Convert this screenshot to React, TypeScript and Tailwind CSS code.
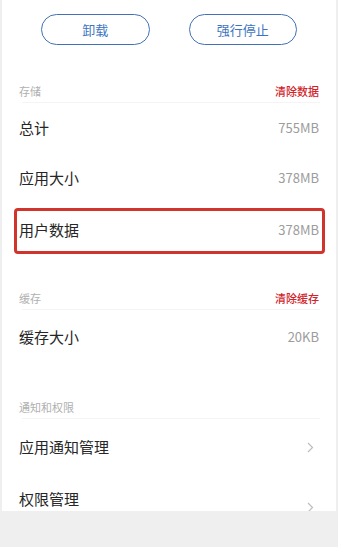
const font = { fontFamily: '"Noto Sans CJK SC", "Noto Sans", sans-serif' };

function Chevron({ className = "" }: { className?: string }) {
  return (
    <svg width="7" height="11" viewBox="0 0 7 11" className={className}>
      <polyline points="1,1 5.5,5.5 1,10" fill="none" stroke="#bdbdbd" strokeWidth="1.2" />
    </svg>
  );
}

function SectionHeader({ title, action, height }: { title: string; action?: string; height: string }) {
  return (
    <div className={`flex items-end ${height}`}>
      <div className="relative flex flex-1 items-center justify-between px-[17px] pb-[4px]">
        <span className="text-[11px] leading-[16px] text-[#b0b0b0]">{title}</span>
        {action && <span className="text-[11px] font-medium leading-[16px] text-[#d1232a]">{action}</span>}
        <div className="absolute bottom-0 left-[20px] right-[16px] h-px bg-[#f4f4f4]" />
      </div>
    </div>
  );
}

function Row({ label, value, height = "h-[50px]" }: { label: string; value: string; height?: string }) {
  return (
    <div className={`flex items-center justify-between px-[17px] ${height}`}>
      <span className="text-[15px] text-[#262626]">{label}</span>
      <span className="text-[13px] text-[#9c9c9c]">{value}</span>
    </div>
  );
}

export default function App() {
  return (
    <div className="h-[547px] w-[338px] overflow-hidden bg-[#efefef]" style={font}>
      <div className="mx-[2px] h-[511px] overflow-hidden bg-white">
        <div className="flex gap-[39px] px-[39px] pt-[14px]">
          <button
            type="button"
            className="h-[31px] flex-1 rounded-full border-[1.5px] border-[#4272b5] text-[13px] text-[#3b74bf]"
          >
            卸载
          </button>
          <button
            type="button"
            className="h-[31px] flex-1 rounded-full border-[1.5px] border-[#4272b5] text-[13px] text-[#3b74bf]"
          >
            强行停止
          </button>
        </div>

        <SectionHeader title="存储" action="清除数据" height="h-[58px]" />
        <Row label="总计" value="755MB" />
        <Row label="应用大小" value="378MB" />
        <div className="ml-[12px] mr-[11px] mt-[5px] flex h-[46px] items-center justify-between rounded-[4px] border-[3px] border-[#d0342c] pb-[2px] pl-[2px] pr-[3px]">
          <span className="text-[15px] text-[#262626]">用户数据</span>
          <span className="text-[13px] text-[#9c9c9c]">378MB</span>
        </div>

        <SectionHeader title="缓存" action="清除缓存" height="h-[56px]" />
        <Row label="缓存大小" value="20KB" height="h-[54px]" />

        <SectionHeader title="通知和权限" height="h-[55px]" />
        <div className="flex h-[56px] items-center justify-between pl-[17px] pr-[22px]">
          <span className="text-[15px] text-[#262626]">应用通知管理</span>
          <Chevron />
        </div>
        <div className="flex h-[48px] items-center justify-between pl-[17px] pr-[22px]">
          <span className="text-[15px] text-[#262626]">权限管理</span>
          <Chevron className="mt-[16px]" />
        </div>
      </div>
    </div>
  );
}
